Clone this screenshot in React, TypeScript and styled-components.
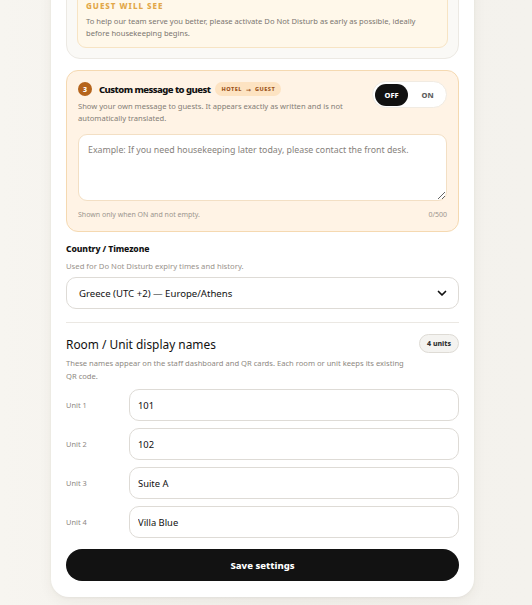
import styled, { createGlobalStyle } from 'styled-components';

const GlobalStyle = createGlobalStyle`
  html, body {
    margin: 0;
    padding: 0;
    background: linear-gradient(90deg, #f7f5f0 0%, #f3f1ec 50%, #f4f2ed 100%);
    font-family: 'Noto Sans', 'Liberation Sans', sans-serif;
    color: #111;
    overflow: hidden;
  }
  * {
    box-sizing: border-box;
  }
`;

const units = [
  { label: 'Unit 1', value: '101' },
  { label: 'Unit 2', value: '102' },
  { label: 'Unit 3', value: 'Suite A' },
  { label: 'Unit 4', value: 'Villa Blue' },
];

const ChevronDown = () => (
  <svg width="12" height="12" viewBox="0 0 24 24" fill="none">
    <path
      d="M5 9l7 7 7-7"
      stroke="#111"
      strokeWidth="3.4"
      strokeLinecap="round"
      strokeLinejoin="round"
    />
  </svg>
);

const App = () => {
  return (
    <Page>
      <GlobalStyle />
      <Card>
        <PrevSection>
          <Preview>
            <PreviewLabel>Guest will see</PreviewLabel>
            <PreviewText>
              To help our team serve you better, please activate Do Not Disturb as early as
              possible, ideally before housekeeping begins.
            </PreviewText>
          </Preview>
        </PrevSection>

        <MessageCard>
          <MessageTop>
            <div>
              <TitleRow>
                <StepBadge>3</StepBadge>
                <MessageTitle>Custom message to guest</MessageTitle>
                <Tag>
                  Hotel <Arrow>→</Arrow> Guest
                </Tag>
              </TitleRow>
              <MessageDesc>
                Show your own message to guests. It appears exactly as written and is not
                automatically translated.
              </MessageDesc>
            </div>
            <Toggle>
              <ToggleOption $active>OFF</ToggleOption>
              <ToggleOption>ON</ToggleOption>
            </Toggle>
          </MessageTop>
          <MessageArea placeholder="Example: If you need housekeeping later today, please contact the front desk." />
          <MessageFooter>
            <span>Shown only when ON and not empty.</span>
            <span>0/500</span>
          </MessageFooter>
        </MessageCard>

        <FieldLabel>Country / Timezone</FieldLabel>
        <FieldHint>Used for Do Not Disturb expiry times and history.</FieldHint>
        <Select>
          <span>Greece (UTC +2) — Europe/Athens</span>
          <ChevronDown />
        </Select>

        <Divider />

        <SectionHeader>
          <SectionTitle>Room / Unit display names</SectionTitle>
          <CountPill>4 units</CountPill>
        </SectionHeader>
        <SectionHint>
          These names appear on the staff dashboard and QR cards. Each room or unit keeps its
          existing QR code.
        </SectionHint>

        <UnitList>
          {units.map((u) => (
            <UnitRow key={u.label}>
              <UnitLabel>{u.label}</UnitLabel>
              <UnitInput defaultValue={u.value} />
            </UnitRow>
          ))}
        </UnitList>

        <SaveButton type="button">Save settings</SaveButton>
      </Card>
    </Page>
  );
};

export default App;

// Styled Components
const Page = styled.div`
  width: 532px;
  height: 605px;
  overflow: hidden;
`;

const Card = styled.div`
  width: 423px;
  margin: -37px 0 0 51px;
  padding: 15px 15px 16px;
  background: #fff;
  border-radius: 18px;
  box-shadow: 0 4px 14px rgba(60, 50, 30, 0.06), 0 1px 3px rgba(60, 50, 30, 0.05);
  display: flex;
  flex-direction: column;
`;

const PrevSection = styled.div`
  padding: 10px;
  border: 1px solid #ece9e3;
  border-radius: 14px;
  background: #faf9f6;
`;

const Preview = styled.div`
  padding: 10px 8px 8px;
  border: 1px solid #f7e4c4;
  border-radius: 9px;
  background: #fff8ea;
`;

const PreviewLabel = styled.div`
  font-size: 8px;
  line-height: 12px;
  font-weight: 800;
  letter-spacing: 1px;
  text-transform: uppercase;
  color: #e2a748;
  margin-bottom: 3px;
`;

const PreviewText = styled.div`
  font-size: 7.6px;
  line-height: 12px;
  color: #7b7670;
`;

const MessageCard = styled.div`
  margin-top: 11px;
  padding: 11px;
  border: 1px solid #f5d9b1;
  border-radius: 12px;
  background: #fff3e5;
  display: flex;
  flex-direction: column;
`;

const MessageTop = styled.div`
  display: flex;
  justify-content: space-between;
  align-items: flex-start;
`;

const TitleRow = styled.div`
  display: flex;
  align-items: center;
  height: 14px;
`;

const StepBadge = styled.span`
  width: 14px;
  height: 14px;
  border-radius: 50%;
  background: #b5641c;
  color: #fff;
  font-size: 7px;
  font-weight: 800;
  display: flex;
  align-items: center;
  justify-content: center;
  margin-right: 7px;
`;

const MessageTitle = styled.span`
  font-size: 9.5px;
  font-weight: 800;
  color: #111;
  letter-spacing: -0.55px;
`;

const Tag = styled.span`
  margin-left: 5px;
  padding: 0 6px;
  height: 14px;
  display: flex;
  align-items: center;
  gap: 2px;
  border-radius: 7px;
  background: #fde3c2;
  color: #9b531b;
  font-size: 5.6px;
  font-weight: 800;
  letter-spacing: 0.5px;
  text-transform: uppercase;
  white-space: pre;
`;

const Arrow = styled.span`
  font-family: 'DejaVu Sans', sans-serif;
  font-size: 6px;
  letter-spacing: 0;
`;

const MessageDesc = styled.div`
  margin-top: 4px;
  max-width: 275px;
  font-size: 7.6px;
  line-height: 12px;
  color: #837d76;
`;

const Toggle = styled.div`
  margin-top: -1px;
  display: flex;
  align-items: center;
  padding: 2px;
  height: 27px;
  border-radius: 14px;
  background: #fff;
  border: 1px solid #f1ebe2;
`;

const ToggleOption = styled.span<{ $active?: boolean }>`
  width: 33px;
  height: 22px;
  border-radius: 11px;
  display: flex;
  align-items: center;
  justify-content: center;
  font-size: 7.5px;
  font-weight: 800;
  background: ${({ $active }) => ($active ? '#111' : 'transparent')};
  color: ${({ $active }) => ($active ? '#fff' : '#5f5f5f')};
  margin-right: ${({ $active }) => ($active ? '3px' : '0')};
`;

const MessageArea = styled.textarea`
  margin-top: 10px;
  height: 67px;
  padding: 9px 9px;
  border: 1px solid #f3dfc4;
  border-radius: 9px;
  background: #fff;
  font-family: 'Noto Sans', 'Liberation Sans', sans-serif;
  font-size: 8.8px;
  line-height: 12px;
  color: #111;
  outline: none;
  &::placeholder {
    color: #86817b;
  }
`;

const MessageFooter = styled.div`
  margin-top: 9px;
  display: flex;
  justify-content: space-between;
  font-size: 7px;
  line-height: 10px;
  color: #9b958e;
`;

const FieldLabel = styled.div`
  margin-top: 11px;
  font-size: 8.6px;
  line-height: 13px;
  font-weight: 800;
  color: #111;
  letter-spacing: -0.1px;
`;

const FieldHint = styled.div`
  margin-top: 5px;
  font-size: 7.7px;
  line-height: 11px;
  color: #99938c;
`;

const Select = styled.div`
  margin-top: 5px;
  height: 32px;
  padding: 0 10px 0 12px;
  border: 1px solid #dedbd6;
  border-radius: 10px;
  display: flex;
  align-items: center;
  justify-content: space-between;
  font-size: 9.6px;
  color: #111;
`;

const Divider = styled.div`
  margin-top: 13px;
  height: 1px;
  background: #ebe8e3;
`;

const SectionHeader = styled.div`
  margin-top: 11px;
  display: flex;
  align-items: center;
  justify-content: space-between;
  height: 19px;
`;

const SectionTitle = styled.div`
  font-size: 11.9px;
  color: #111;
`;

const CountPill = styled.span`
  height: 19px;
  padding: 0 7px;
  border-radius: 10px;
  border: 1px solid #dedbd5;
  background: #f4f3f0;
  display: flex;
  align-items: center;
  font-size: 7px;
  font-weight: 800;
  color: #333;
`;

const SectionHint = styled.div`
  margin-top: 4px;
  max-width: 345px;
  font-size: 7.6px;
  line-height: 13px;
  color: #8e8882;
`;

const UnitList = styled.div`
  margin-top: 6px;
  display: flex;
  flex-direction: column;
  gap: 7px;
`;

const UnitRow = styled.div`
  display: grid;
  grid-template-columns: 63px 1fr;
  align-items: center;
`;

const UnitLabel = styled.span`
  font-size: 7.4px;
  color: #8d8781;
`;

const UnitInput = styled.input`
  height: 32px;
  padding: 0 8px;
  border: 1px solid #dedbd6;
  border-radius: 10px;
  font-family: 'Noto Sans', 'Liberation Sans', sans-serif;
  font-size: 9.4px;
  color: #111;
  outline: none;
`;

const SaveButton = styled.button`
  margin-top: 11px;
  height: 32px;
  border: none;
  border-radius: 16px;
  background: #121212;
  color: #fff;
  font-family: 'Noto Sans', 'Liberation Sans', sans-serif;
  font-size: 9.5px;
  font-weight: 800;
  cursor: pointer;
`;
